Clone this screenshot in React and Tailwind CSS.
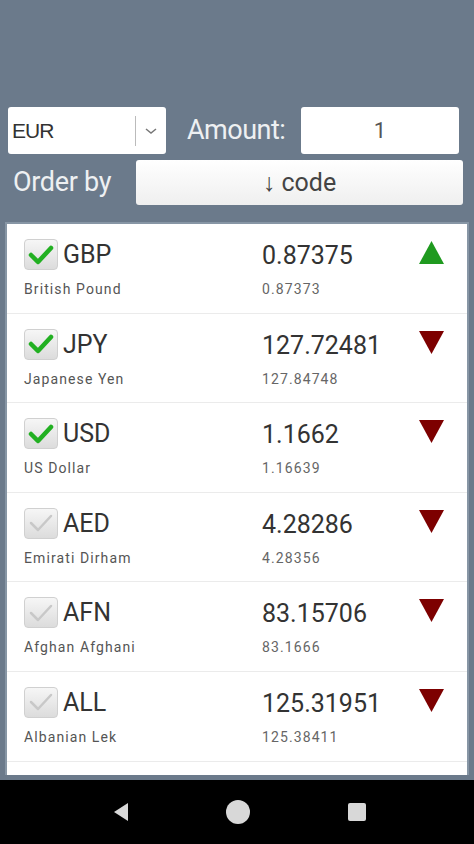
import React from "react";

const rows = [
  { code: "GBP", name: "British Pound", value: "0.87375", prev: "0.87373", checked: true, up: true },
  { code: "JPY", name: "Japanese Yen", value: "127.72481", prev: "127.84748", checked: true, up: false },
  { code: "USD", name: "US Dollar", value: "1.1662", prev: "1.16639", checked: true, up: false },
  { code: "AED", name: "Emirati Dirham", value: "4.28286", prev: "4.28356", checked: false, up: false },
  { code: "AFN", name: "Afghan Afghani", value: "83.15706", prev: "83.1666", checked: false, up: false },
  { code: "ALL", name: "Albanian Lek", value: "125.31951", prev: "125.38411", checked: false, up: false },
];

function Check({ on }) {
  return (
    <div className="w-[34px] h-[31px] rounded-[4px] bg-gradient-to-b from-[#f6f6f6] to-[#dcdcdc] border border-[#d0d0d0] flex items-center justify-center shrink-0">
      <svg width="26" height="22" viewBox="0 0 26 22">
        <path
          d="M3 11 L10 18 L23 4"
          fill="none"
          stroke={on ? "#22b022" : "#c8c8c8"}
          strokeWidth={on ? 4.5 : 2.5}
          strokeLinecap="round"
          strokeLinejoin="round"
        />
      </svg>
    </div>
  );
}

function Arrow({ up }) {
  return up ? (
    <svg width="25" height="23" viewBox="0 0 25 23">
      <polygon points="12.5,0 25,23 0,23" fill="#1f9a1f" />
    </svg>
  ) : (
    <svg width="25" height="23" viewBox="0 0 25 23">
      <polygon points="0,0 25,0 12.5,23" fill="#7d0000" />
    </svg>
  );
}

function Row({ r }) {
  return (
    <div className="h-[89.6px] border-b border-[#ebebeb] flex px-[17px] pt-[15px]">
      <div className="w-[238px]">
        <div className="flex items-center gap-[5px]">
          <Check on={r.checked} />
          <span className="text-[25px] text-[#333] leading-none">{r.code}</span>
        </div>
        <div className="text-[14px] tracking-[1.1px] text-[#555] mt-[12px] leading-none">{r.name}</div>
      </div>
      <div className="flex-1 pt-[4px]">
        <div className="text-[25px] text-[#333] leading-none">{r.value}</div>
        <div className="text-[14px] tracking-[1.1px] text-[#666] mt-[14px] leading-none">{r.prev}</div>
      </div>
      <div className="w-[31px] pt-[2px]">
        <Arrow up={r.up} />
      </div>
    </div>
  );
}

export default function App() {
  return (
    <div className="w-[474px] h-[844px] flex flex-col bg-[#6b7a8b] font-['Roboto',sans-serif] overflow-hidden">
      <div className="flex-1 flex flex-col px-[5px] pt-[107px] min-h-0">
        <div className="flex items-center px-[3px] h-[47px]">
          <div className="w-[158px] h-[47px] bg-white rounded-[3px] flex items-center">
            <span className="flex-1 pl-[4px] text-[21px] text-[#333] font-['Liberation_Sans',sans-serif] tracking-[-1px]">EUR</span>
            <div className="w-px h-[30px] bg-[#bbb]" />
            <svg width="30" height="20" viewBox="0 0 30 20">
              <path d="M10 8 L15 12 L20 8" fill="none" stroke="#777" strokeWidth="1.5" />
            </svg>
          </div>
          <span className="ml-[21px] text-[27px] text-[#eef0f2] tracking-[-0.5px] leading-none">Amount:</span>
          <div className="ml-auto w-[158px] h-[47px] bg-white rounded-[3px] flex items-center justify-center text-[22px] text-[#555]">1</div>
          <div className="w-[7px]" />
        </div>
        <div className="flex items-center mt-[6px] h-[45px]">
          <span className="pl-[8px] w-[131px] text-[27px] text-[#eef0f2] tracking-[-0.3px] leading-none">Order by</span>
          <div className="w-[327px] h-[45px] bg-gradient-to-b from-white to-[#efefef] rounded-[3px] flex items-center justify-center text-[25px] text-[#444]">
            ↓ code
          </div>
        </div>
        <div className="mt-[17px] bg-white border-x-[2px] border-t-[2px] border-[#8796a5] flex-1 min-h-0 overflow-hidden mb-[5px]">
          {rows.map((r) => (
            <Row key={r.code} r={r} />
          ))}
        </div>
      </div>
      <div className="h-[64px] bg-black flex items-center justify-center shrink-0">
        <div className="flex items-center pl-[4px]">
          <svg width="18" height="20" viewBox="0 0 18 20">
            <polygon points="16,1 16,19 2,10" fill="#d8d8d8" />
          </svg>
          <div className="ml-[96px] w-[24px] h-[24px] rounded-full bg-[#d8d8d8]" />
          <div className="ml-[98px] w-[18px] h-[18px] rounded-[2px] bg-[#d8d8d8]" />
        </div>
      </div>
    </div>
  );
}
